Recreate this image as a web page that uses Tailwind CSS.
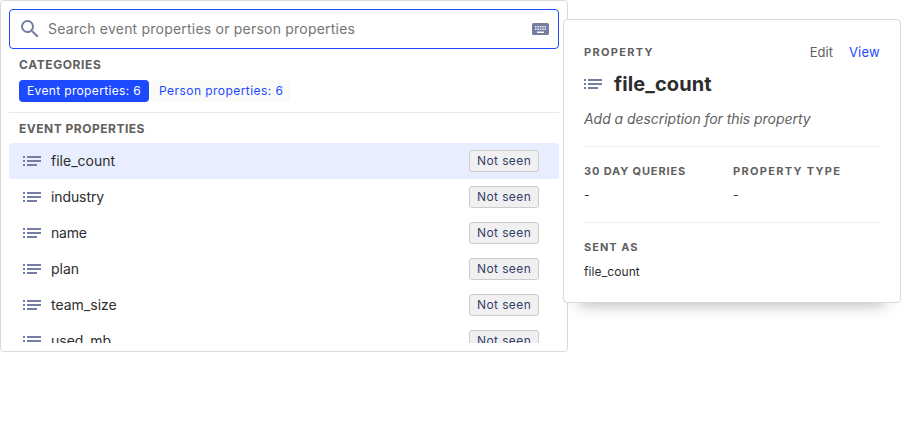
<!DOCTYPE html>
<html lang="en">
<head>
<meta charset="utf-8">
<title>Property filter</title>
<script src="https://cdn.jsdelivr.net/npm/@tailwindcss/browser@4"></script>
</head>
<body class="relative h-[431px] overflow-hidden bg-white font-['Inter',sans-serif] text-sm text-[#2d2d2d]">
<svg class="hidden">
  <symbol id="list" viewBox="0 0 18 10"><path d="M0 0h2v2H0zM4 0h14v2H4zM0 4h2v2H0zM4 4h14v2H4zM0 8h2v2H0zM4 8h10v2H4z"/></symbol>
</svg>

<main class="flex h-[352px] w-[568px] flex-col rounded border border-[#d9d9d9] bg-white p-2">
  <div class="flex h-10 shrink-0 items-center rounded border border-[#1d4aff] pr-[9px] pl-2">
    <svg class="size-6 shrink-0 fill-[#747ea2]" viewBox="0 0 24 24"><path d="M15.5 14h-.79l-.28-.27A6.47 6.47 0 0 0 16 9.5 6.5 6.5 0 1 0 9.5 16c1.61 0 3.09-.59 4.23-1.57l.27.28v.79l5 4.99L20.49 19l-4.99-5zm-6 0C7.01 14 5 11.99 5 9.5S7.01 5 9.5 5 14 7.01 14 9.5 11.99 14 9.5 14z"/></svg>
    <span class="ml-1.5 flex-1 tracking-[.21px] text-[#757575]">Search event properties or person properties</span>
    <svg class="h-3 w-[17px] shrink-0" viewBox="0 0 17 12"><rect width="17" height="12" rx="1.5" fill="#747ea2"/><path fill="#fff" fill-opacity=".85" d="M3 3h1.500v1.500H3zM5.400 3h1.500v1.500H5.400zM7.800 3h1.500v1.500H7.800zM10.200 3h1.500v1.500h-1.500zM12.500 3h1.500v1.500h-1.500zM3 5.400h1.500v1.500H3zM5.400 5.400h1.500v1.500H5.400zM7.800 5.400h1.500v1.500H7.800zM10.200 5.400h1.500v1.500h-1.500zM12.500 5.400h1.500v1.500h-1.500z"/><path fill="#fff" d="M5 8.500h7V10H5z"/></svg>
  </div>

  <section class="h-16 shrink-0 border-b border-[#e8e8e8] px-2.5 pt-1.5">
    <h2 class="h-[25px] text-xs leading-5 font-bold tracking-[.6px] text-[#5f5f5f]">CATEGORIES</h2>
    <div class="flex gap-0.5 text-xs leading-[22px]">
      <span class="h-[22px] w-[130px] rounded bg-[#1d4aff] pl-2 tracking-[.35px] whitespace-nowrap text-white">Event properties: 6</span>
      <span class="h-[22px] w-[140px] rounded bg-[#fafaf9] pl-2 tracking-[.45px] whitespace-nowrap text-[#1d4aff]">Person properties: 6</span>
    </div>
  </section>

  <h2 class="h-[30px] shrink-0 px-2.5 pt-1.5 text-xs leading-5 font-bold tracking-[.5px] text-[#5f5f5f]">EVENT PROPERTIES</h2>
  <ul class="h-[200px] shrink-0 overflow-hidden">
    <li class="flex h-9 items-center rounded bg-[#e8edff] pr-5 pl-3.5"><svg class="h-2.5 w-[18px] fill-[#747ea2]"><use href="#list"/></svg><span class="ml-2.5 flex-1">file_count</span><span class="h-[22px] w-[70px] rounded-[3px] border border-[#ccc] bg-[#f0f0f0] pl-[7px] text-xs leading-5 tracking-[.4px] text-[#35416b]">Not seen</span></li>
    <li class="flex h-9 items-center pr-5 pl-3.5"><svg class="h-2.5 w-[18px] fill-[#747ea2]"><use href="#list"/></svg><span class="ml-2.5 flex-1 tracking-[-.1px]">industry</span><span class="h-[22px] w-[70px] rounded-[3px] border border-[#ccc] bg-[#f0f0f0] pl-[7px] text-xs leading-5 tracking-[.4px] text-[#35416b]">Not seen</span></li>
    <li class="flex h-9 items-center pr-5 pl-3.5"><svg class="h-2.5 w-[18px] fill-[#747ea2]"><use href="#list"/></svg><span class="ml-2.5 flex-1 tracking-[-.2px]">name</span><span class="h-[22px] w-[70px] rounded-[3px] border border-[#ccc] bg-[#f0f0f0] pl-[7px] text-xs leading-5 tracking-[.4px] text-[#35416b]">Not seen</span></li>
    <li class="flex h-9 items-center pr-5 pl-3.5"><svg class="h-2.5 w-[18px] fill-[#747ea2]"><use href="#list"/></svg><span class="ml-2.5 flex-1">plan</span><span class="h-[22px] w-[70px] rounded-[3px] border border-[#ccc] bg-[#f0f0f0] pl-[7px] text-xs leading-5 tracking-[.4px] text-[#35416b]">Not seen</span></li>
    <li class="flex h-9 items-center pr-5 pl-3.5"><svg class="h-2.5 w-[18px] fill-[#747ea2]"><use href="#list"/></svg><span class="ml-2.5 flex-1">team_size</span><span class="h-[22px] w-[70px] rounded-[3px] border border-[#ccc] bg-[#f0f0f0] pl-[7px] text-xs leading-5 tracking-[.4px] text-[#35416b]">Not seen</span></li>
    <li class="flex h-9 items-center pr-5 pl-3.5"><svg class="h-2.5 w-[18px] fill-[#747ea2]"><use href="#list"/></svg><span class="ml-2.5 flex-1">used_mb</span><span class="h-[22px] w-[70px] rounded-[3px] border border-[#ccc] bg-[#f0f0f0] pl-[7px] text-xs leading-5 tracking-[.4px] text-[#35416b]">Not seen</span></li>
  </ul>
</main>

<!-- Definition popover, floating over the list panel -->
<aside class="absolute top-[19px] left-[563px] flex h-[284px] w-[338px] flex-col rounded border border-[#d9d9d9] bg-white px-5 shadow-[0_16px_16px_-16px_rgba(0,0,0,0.35)]">
  <div class="flex h-[52px] shrink-0 items-start pt-[22px] text-[13px] leading-5">
    <h3 class="flex-1 text-[11px] leading-5 font-bold tracking-[1.3px] text-[#5f5f5f]">PROPERTY</h3>
    <span class="text-[#5f5f5f]">Edit</span>
    <span class="ml-4 tracking-[.25px] text-[#1d4aff]">View</span>
  </div>
  <div class="flex h-6 shrink-0 items-center">
    <svg class="h-2.5 w-[18px] fill-[#747ea2]"><use href="#list"/></svg>
    <h1 class="ml-3 text-xl leading-6 font-bold tracking-[.1px]">file_count</h1>
  </div>
  <p class="h-[50px] shrink-0 pt-[13px] tracking-[-.05px] text-[#5f5f5f] italic">Add a description for this property</p>
  <div class="grid h-[76px] shrink-0 grid-cols-[149px_1fr] border-t border-[#eee] pt-3.5">
    <div><h3 class="text-[11px] leading-5 font-bold tracking-[.85px] text-[#5f5f5f]">30 DAY QUERIES</h3><p class="pt-1 text-xs leading-5">-</p></div>
    <div><h3 class="text-[11px] leading-5 font-bold tracking-[1.3px] text-[#5f5f5f]">PROPERTY TYPE</h3><p class="pt-1 text-xs leading-5">-</p></div>
  </div>
  <div class="border-t border-[#eee] pt-3.5">
    <h3 class="text-[11px] leading-5 font-bold tracking-[1px] text-[#5f5f5f]">SENT AS</h3>
    <p class="pt-[5px] text-xs leading-5 tracking-[.1px]">file_count</p>
  </div>
</aside>
</body>
</html>
